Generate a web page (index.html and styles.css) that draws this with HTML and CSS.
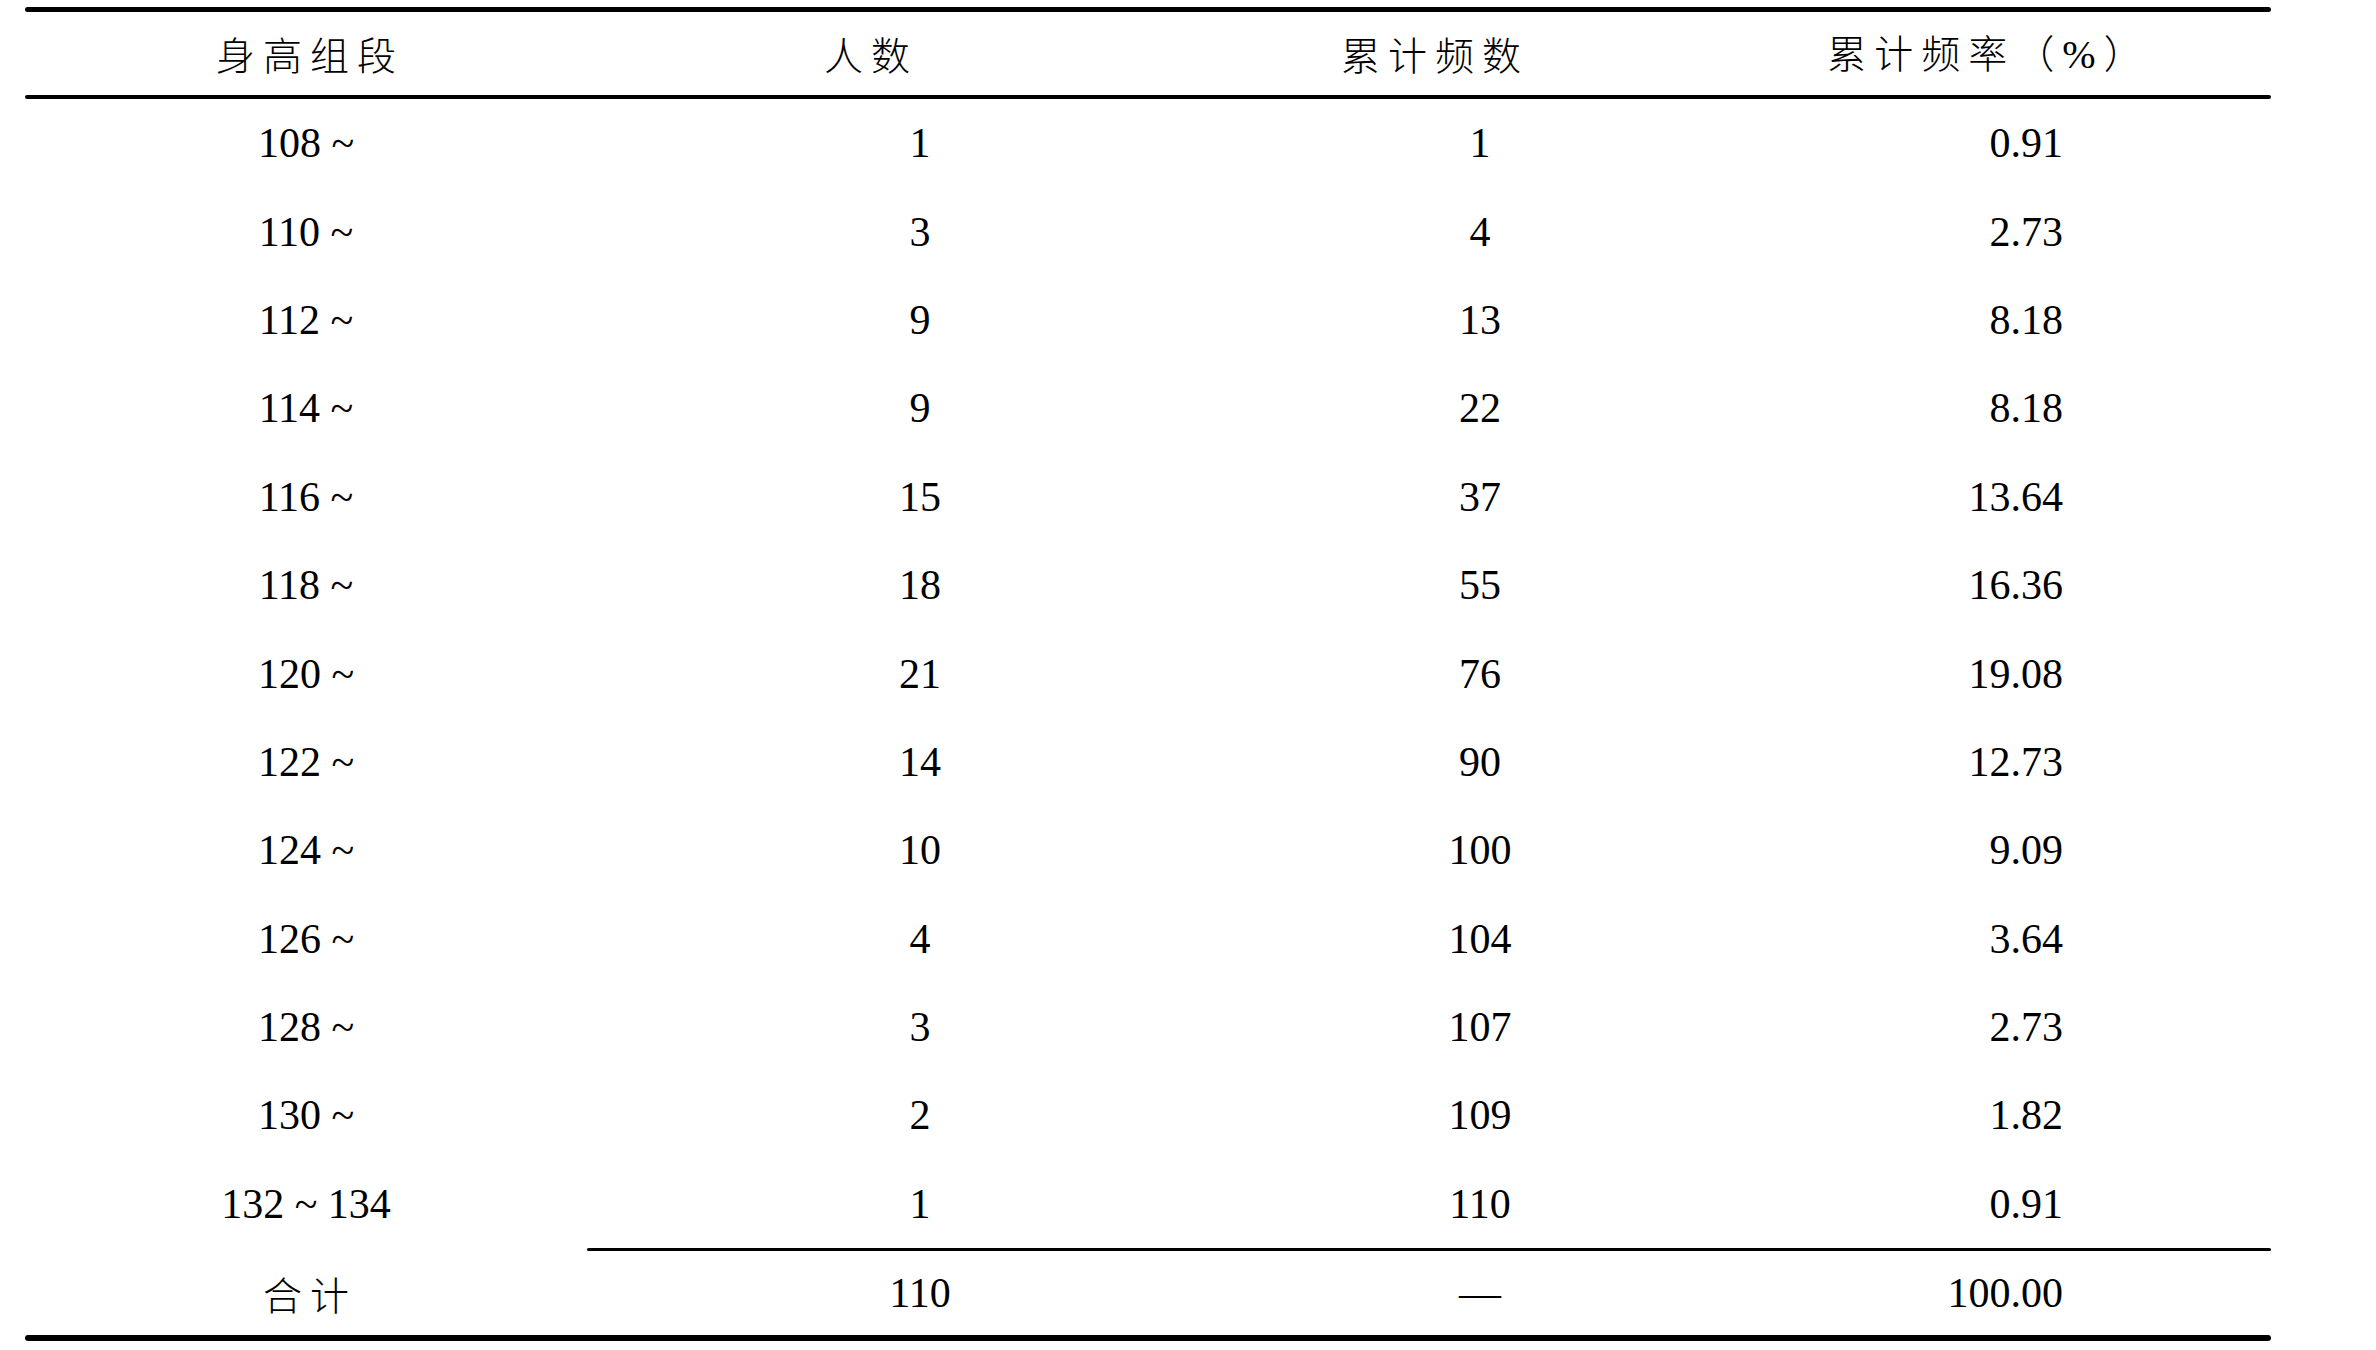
FILE: index.html
```html
<!DOCTYPE html>
<html lang="zh-CN">
<head>
<meta charset="utf-8">
<title>身高组段频数表</title>
<link rel="stylesheet" href="styles.css">
</head>
<body>
<div class="table">
  <div class="rule rule-top"></div>
  <div class="row head">
    <div class="cell c1">身高组段</div>
    <div class="cell c2">人数</div>
    <div class="cell c3">累计频数</div>
    <div class="cell c4">累计频率（<span class="num">%</span>）</div>
  </div>
  <div class="rule rule-head"></div>
  <div class="body">
    <div class="row"><div class="cell c1">108 ~</div><div class="cell c2">1</div><div class="cell c3">1</div><div class="cell c4">0.91</div></div>
    <div class="row"><div class="cell c1">110 ~</div><div class="cell c2">3</div><div class="cell c3">4</div><div class="cell c4">2.73</div></div>
    <div class="row"><div class="cell c1">112 ~</div><div class="cell c2">9</div><div class="cell c3">13</div><div class="cell c4">8.18</div></div>
    <div class="row"><div class="cell c1">114 ~</div><div class="cell c2">9</div><div class="cell c3">22</div><div class="cell c4">8.18</div></div>
    <div class="row"><div class="cell c1">116 ~</div><div class="cell c2">15</div><div class="cell c3">37</div><div class="cell c4">13.64</div></div>
    <div class="row"><div class="cell c1">118 ~</div><div class="cell c2">18</div><div class="cell c3">55</div><div class="cell c4">16.36</div></div>
    <div class="row"><div class="cell c1">120 ~</div><div class="cell c2">21</div><div class="cell c3">76</div><div class="cell c4">19.08</div></div>
    <div class="row"><div class="cell c1">122 ~</div><div class="cell c2">14</div><div class="cell c3">90</div><div class="cell c4">12.73</div></div>
    <div class="row"><div class="cell c1">124 ~</div><div class="cell c2">10</div><div class="cell c3">100</div><div class="cell c4">9.09</div></div>
    <div class="row"><div class="cell c1">126 ~</div><div class="cell c2">4</div><div class="cell c3">104</div><div class="cell c4">3.64</div></div>
    <div class="row"><div class="cell c1">128 ~</div><div class="cell c2">3</div><div class="cell c3">107</div><div class="cell c4">2.73</div></div>
    <div class="row"><div class="cell c1">130 ~</div><div class="cell c2">2</div><div class="cell c3">109</div><div class="cell c4">1.82</div></div>
    <div class="row"><div class="cell c1">132 ~ 134</div><div class="cell c2">1</div><div class="cell c3">110</div><div class="cell c4">0.91</div></div>
  </div>
  <div class="rule rule-sub"></div>
  <div class="row total">
    <div class="cell c1 zh">合计</div>
    <div class="cell c2">110</div>
    <div class="cell c3">—</div>
    <div class="cell c4">100.00</div>
  </div>
  <div class="rule rule-bottom"></div>
</div>
</body>
</html>
```

FILE: styles.css
```css
html, body {
  margin: 0;
  padding: 0;
  background: #ffffff;
}

body {
  width: 2376px;
  height: 1350px;
  overflow: hidden;
  color: #000000;
  font-family: "Liberation Serif", "Times New Roman", serif;
  font-size: 42px;
}

.table {
  width: 2246px;
  margin: 7px 0 0 25px;
  display: flex;
  flex-direction: column;
}

.rule {
  background: #000000;
  border-radius: 3px;
}

.rule-top {
  height: 5px;
}

.rule-head {
  height: 4px;
}

.rule-sub {
  height: 3px;
  margin-left: 562px;
}

.rule-bottom {
  height: 6px;
}

.body {
  display: flex;
  flex-direction: column;
}

.row {
  display: grid;
  grid-template-columns: 562px 666px 454px 564px;
  height: 88.4px;
  align-items: center;
}

.row.head {
  height: 83px;
}

.row.total {
  height: 84px;
}

.cell {
  text-align: center;
  white-space: nowrap;
  line-height: 1;
}

.c4 {
  text-align: right;
  padding-right: 208px;
}

.head .cell,
.zh {
  font-family: "Noto Sans CJK SC", "Noto Sans", sans-serif;
  font-weight: 300;
  font-size: 39px;
  letter-spacing: 8px;
}

.head .c1 {
  padding-left: 8px;
}

.head .c2 {
  padding-right: 98px;
}

.head .c3 {
  padding-right: 90px;
}

.head .c4 {
  text-align: center;
  padding-right: 0;
  padding-left: 0;
}

.zh {
  padding-left: 8px;
}

.num {
  font-family: "Liberation Serif", "Times New Roman", serif;
  font-size: 40px;
  letter-spacing: 8px;
}
```
